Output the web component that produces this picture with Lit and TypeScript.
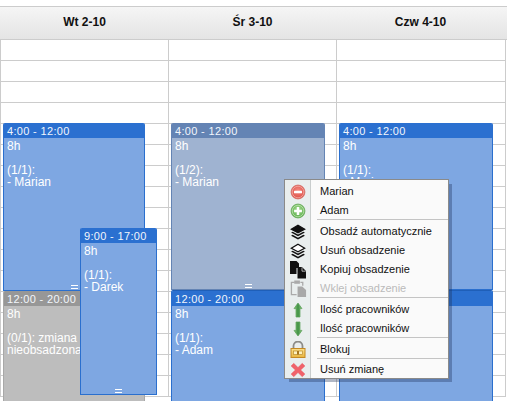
import { LitElement, html, css, svg } from "lit";
import { customElement } from "lit/decorators.js";

type Ev = { cls: string; l: number; t: number; w: number; h: number; time: string; lines: string[]; grip?: boolean };

const events: Ev[] = [
  { cls: "blue", l: 3, t: 123, w: 142, h: 168, time: "4:00 - 12:00", lines: ["8h", "", "(1/1):", "- Marian"], grip: true },
  { cls: "gray", l: 3, t: 291, w: 142, h: 130, time: "12:00 - 20:00", lines: ["8h", "", "(0/1): zmiana", "nieobsadzona"] },
  { cls: "faded", l: 171, t: 123, w: 154, h: 167, time: "4:00 - 12:00", lines: ["8h", "", "(1/2):", "- Marian"], grip: true },
  { cls: "blue edge", l: 171, t: 290, w: 154, h: 130, time: "12:00 - 20:00", lines: ["8h", "", "(1/1):", "- Adam"] },
  { cls: "blue", l: 339, t: 123, w: 154, h: 167, time: "4:00 - 12:00", lines: ["8h", "", "(1/1):", "- Marian"] },
  { cls: "blue edge", l: 339, t: 290, w: 154, h: 130, time: "", lines: [] },
  { cls: "blue", l: 80, t: 228, w: 77, h: 167, time: "9:00 - 17:00", lines: ["8h", "", "(1/1):", "- Darek"], grip: true },
];

const stack = (filled: boolean) => svg`<svg width="16" height="16" viewBox="0 0 18 18">
  <path d="M9 1.5 16.5 6 9 10 1.5 6Z" fill="${filled ? "#111" : "#fff"}" stroke="#111" stroke-width="1.4"/>
  <path d="M3 8.6 1.2 9.6 9 13.8 16.8 9.6 15 8.6 9 11.8Z" fill="#111"/>
  <path d="M3 12.2 1.2 13.2 9 17.4 16.8 13.2 15 12.2 9 15.4Z" fill="#111"/>
</svg>`;

const icons: Record<string, unknown> = {
  minus: svg`<svg width="16" height="16" viewBox="0 0 18 18">
    <defs><radialGradient id="r" cx=".5" cy=".4" r=".65"><stop offset="0" stop-color="#f48a80"/><stop offset="1" stop-color="#d9473f"/></radialGradient></defs>
    <circle cx="9" cy="9" r="7.8" fill="url(#r)" stroke="#d4726a" stroke-width="1"/><circle cx="9" cy="9" r="6.5" fill="none" stroke="#f7b5ad" stroke-width=".8"/>
    <rect x="4.5" y="7.5" width="9" height="3" rx=".6" fill="#fff"/></svg>`,
  plus: svg`<svg width="16" height="16" viewBox="0 0 18 18">
    <defs><radialGradient id="g" cx=".5" cy=".4" r=".65"><stop offset="0" stop-color="#a5dc8e"/><stop offset="1" stop-color="#53a846"/></radialGradient></defs>
    <circle cx="9" cy="9" r="7.8" fill="url(#g)" stroke="#6bab5e" stroke-width="1"/><circle cx="9" cy="9" r="6.5" fill="none" stroke="#c4e8b5" stroke-width=".8"/>
    <path d="M7.6 4.6h2.8v3h3v2.8h-3v3H7.6v-3h-3V7.6h3Z" fill="#fff"/></svg>`,
  auto: stack(true),
  clear: stack(false),
  copy: svg`<svg width="16" height="18" viewBox="0 0 16 18">
    <path d="M0 0h6.5L9 2.5V7H6.5v6H0Z" fill="#111"/><path d="M7.5 6h4.5L16 10v7.5H7.5Z" fill="#111"/><path d="M12 6.4v3.8h3.6" fill="none" stroke="#eee" stroke-width=".7"/></svg>`,
  paste: svg`<svg width="17" height="17" viewBox="0 0 18 18">
    <path d="M5 2.5H1.5v13H7" fill="none" stroke="#aaa" stroke-width="1.4"/><path d="M11 2.5h2.5V6" fill="none" stroke="#aaa" stroke-width="1.4"/>
    <rect x="4.5" y="0.5" width="6" height="3.5" fill="#aaa"/><path d="M8 7h5l4 3.5V18H8Z" fill="#a8a8a8"/></svg>`,
  up: svg`<svg width="10" height="16" viewBox="0 0 10 16">
    <defs><linearGradient id="u" x1="0" x2="1" y1="0" y2="0"><stop offset="0" stop-color="#8ed07e"/><stop offset=".5" stop-color="#3f9045"/><stop offset="1" stop-color="#8fce82"/></linearGradient></defs>
    <path d="M5 1 9 6.6H7V15H3V6.6H1Z" fill="url(#u)" stroke="#5a9e58" stroke-width=".7"/></svg>`,
  down: svg`<svg width="10" height="16" viewBox="0 0 10 16">
    <defs><linearGradient id="d" x1="0" x2="1" y1="0" y2="0"><stop offset="0" stop-color="#8ed07e"/><stop offset=".5" stop-color="#3f9045"/><stop offset="1" stop-color="#8fce82"/></linearGradient></defs>
    <path d="M5 15 9 9.4H7V1H3V9.4H1Z" fill="url(#d)" stroke="#5a9e58" stroke-width=".7"/></svg>`,
  lock: svg`<svg width="16" height="17" viewBox="0 0 16 17">
    <defs><linearGradient id="l" x1="0" x2="0" y1="0" y2="1"><stop offset="0" stop-color="#fbe08c"/><stop offset="1" stop-color="#e9b53e"/></linearGradient></defs>
    <path d="M3.5 8V5a4.5 4.5 0 0 1 9 0V8" fill="none" stroke="#8c8c88" stroke-width="1.8"/>
    <rect x="1" y="7.5" width="14" height="9" fill="url(#l)" stroke="#c48a24" stroke-width="1"/>
    <rect x="3.5" y="10" width="9" height="3.6" fill="#fdf1bf" stroke="#b98a2a" stroke-width=".7"/><rect x="7" y="10" width="2" height="3.6" fill="#a87820"/></svg>`,
  x: svg`<svg width="16" height="16" viewBox="0 0 18 18">
    <path d="M4.2 1.5 9 6.2l4.8-4.7 3 3L12 9l4.8 4.6-3 3L9 11.9l-4.8 4.7-3-3L6 9 1.2 4.5Z" fill="#f0626a" stroke="#e3555c" stroke-width=".5"/></svg>`,
};

const menu = [
  { icon: "minus", label: "Marian" },
  { icon: "plus", label: "Adam", sep: true },
  { icon: "auto", label: "Obsadź automatycznie" },
  { icon: "clear", label: "Usuń obsadzenie" },
  { icon: "copy", label: "Kopiuj obsadzenie" },
  { icon: "paste", label: "Wklej obsadzenie", off: true, sep: true },
  { icon: "up", label: "Ilość pracowników" },
  { icon: "down", label: "Ilość pracowników", sep: true },
  { icon: "lock", label: "Blokuj", sep: true },
  { icon: "x", label: "Usuń zmianę" },
];

@customElement("app-root")
export class AppRoot extends LitElement {
  static styles = css`
    :host {
      display: block;
      position: relative;
      height: 401px;
      width: 507px;
      overflow: hidden;
      background: #fff;
      font-family: "Liberation Sans", Arial, sans-serif;
    }
    .head {
      margin-top: 6px;
      display: grid;
      grid-template-columns: repeat(3, 168px) 3px;
      height: 32px;
      border-top: 1px solid #ccc;
      border-bottom: 1px solid #ccc;
      background: linear-gradient(#f5f5f5, #e4e4e4);
    }
    .head div {
      font-size: 12px;
      font-weight: bold;
      color: #111;
      text-align: center;
      line-height: 31px;
      padding-left: 1px;
    }
    .grid {
      display: grid;
      grid-template-columns: repeat(3, 168px);
    }
    .col {
      border-left: 1px solid #ccc;
    }
    .col:nth-child(3) {
      border-right: 1px solid #ccc;
      width: 168px;
    }
    .row {
      height: 20px;
      border-bottom: 1px solid #ccc;
    }
    .ev {
      position: absolute;
      box-sizing: border-box;
      border: 1px solid #2a6fce;
      border-top: 0;
      border-radius: 2px 2px 0 0;
      background: #7ea7e2;
      color: #fff;
      font-size: 12px;
      line-height: 12px;
      overflow: hidden;
    }
    .ev.edge {
      border-top: 1px solid #1f5fb8;
    }
    .ev .t {
      height: 15px;
      background: #2b70d0;
      font-size: 11px;
      line-height: 16px;
      padding-left: 3px;
      letter-spacing: 0.03em;
      color: #f2f6fc;
    }
    .ev .b {
      padding: 2px 0 0 3px;
    }
    .ev .b div {
      min-height: 12px;
      white-space: nowrap;
    }
    .ev.gray {
      background: #bdbdbd;
      border-color: #a8a8a8;
    }
    .ev.gray .t {
      background: #979797;
    }
    .ev.faded {
      background: #9fb3d1;
      border-color: #6484b4;
    }
    .ev.faded .t {
      background: #6484b4;
    }
    .grip {
      position: absolute;
      left: 0;
      right: 0;
      bottom: 1px;
      height: 2px;
      margin: 0 auto;
      width: 7px;
      border-top: 1px solid #fff;
      border-bottom: 1px solid #fff;
    }
    .menu {
      position: absolute;
      left: 284px;
      top: 179px;
      width: 165px;
      box-sizing: border-box;
      border: 1px solid #8a8a8a;
      background: linear-gradient(90deg, #e9eeee 0 25px, #c9cdcd 25px 26px, #fafafa 26px);
      box-shadow: 4px 4px 0 -1px rgba(30, 50, 90, 0.35);
      padding-top: 1px;
    }
    .item {
      display: flex;
      align-items: center;
      height: 19px;
    }
    .item:last-child {
      height: 18px;
    }
    .ic {
      width: 26px;
      height: 19px;
      flex: none;
      display: flex;
      align-items: center;
      justify-content: center;
      position: relative;
      top: 1px;
    }
    .lbl {
      padding-left: 9px;
      font-size: 11px;
      color: #111;
      white-space: nowrap;
    }
    .off .lbl {
      color: #bbb;
    }
    .rule {
      height: 1px;
      background: #c4c4c4;
      margin: 0 0 1px 32px;
    }
  `;

  render() {
    return html`
      <div class="head"><div>Wt 2-10</div><div>Śr 3-10</div><div>Czw 4-10</div><span></span></div>
      <div class="grid">
        ${[0, 1, 2].map(
          () => html`<div class="col">${Array.from({ length: 17 }, () => html`<div class="row"></div>`)}</div>`
        )}
      </div>
      ${events.map(
        (e) => html`<div class="ev ${e.cls}" style="left:${e.l}px;top:${e.t}px;width:${e.w}px;height:${e.h}px">
          <div class="t">${e.time}</div>
          <div class="b">${e.lines.map((l) => html`<div>${l}</div>`)}</div>
          ${e.grip ? html`<div class="grip"></div>` : ""}
        </div>`
      )}
      <div class="menu">
        ${menu.map(
          (m) => html`<div class="item ${m.off ? "off" : ""}">
              <div class="ic">${icons[m.icon]}</div>
              <div class="lbl">${m.label}</div>
            </div>
            ${m.sep ? html`<div class="rule"></div>` : ""}`
        )}
      </div>
    `;
  }
}
